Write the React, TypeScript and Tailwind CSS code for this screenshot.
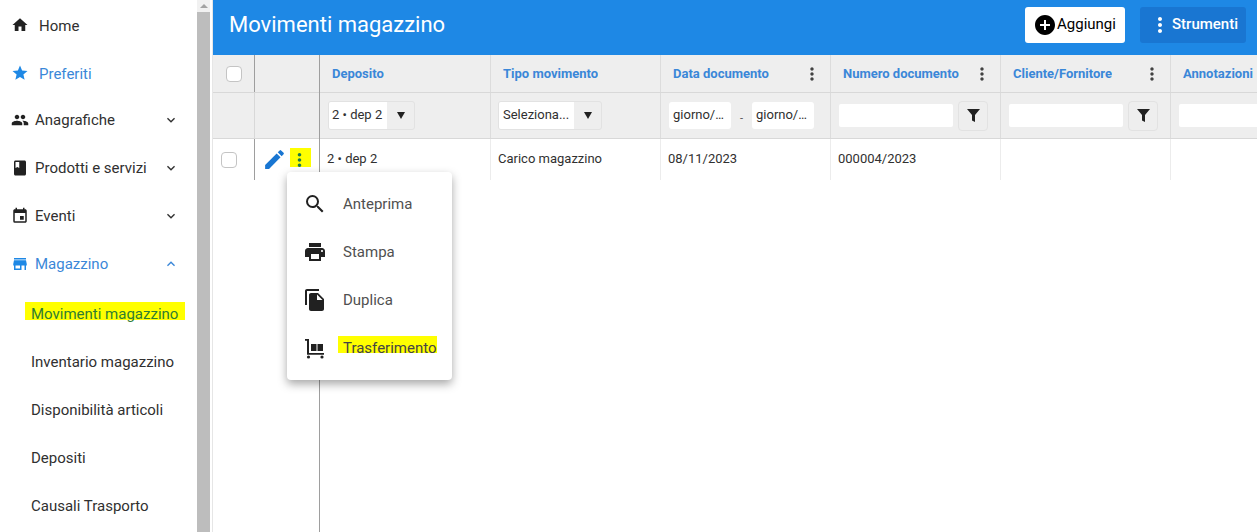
import type { ReactNode } from "react"
import {
  MdAddCircle,
  MdBook,
  MdEdit,
  MdEvent,
  MdExpandLess,
  MdExpandMore,
  MdFileCopy,
  MdHome,
  MdMoreVert,
  MdPeople,
  MdPrint,
  MdSearch,
  MdStar,
  MdStore,
} from "react-icons/md"

const font = "font-['Roboto',sans-serif]"

function TrolleyIcon() {
  return (
    <svg viewBox="0 0 24 24" className="h-6 w-6" fill="#212121">
      <path d="M2 3h4v14h15v1.7H4V4.7H2z" />
      <path d="M8 8h5.5v7H8zM14.5 8H20v7h-5.5z" />
      <circle cx="5.5" cy="21" r="1.6" />
      <circle cx="19" cy="21" r="1.6" />
    </svg>
  )
}

function CaretIcon() {
  return (
    <svg viewBox="0 0 8 7" className="h-[7px] w-[8px]" fill="#212121">
      <path d="M0 0h8L4 7z" />
    </svg>
  )
}

function FunnelIcon() {
  return (
    <svg viewBox="0 0 13 13" className="h-[13px] w-[13px]" fill="#212121">
      <path d="M0 0h13L8 6v7L5 11.5V6z" />
    </svg>
  )
}

function NavItem({
  icon,
  label,
  active,
  wide,
  open,
}: {
  icon: ReactNode
  label: string
  active?: boolean
  wide?: boolean
  open?: boolean
}) {
  return (
    <div
      className={`flex h-12 items-center pl-[11px] pr-[18px] text-[15px] ${active ? "text-[#3a87d8]" : "text-[#303030]"}`}
    >
      <span className={`flex w-[24px] text-[18px] ${wide ? "" : "-mt-[3px]"} ${active ? "text-[#1e88e5]" : "text-[#212121]"}`}>
        {icon}
      </span>
      <span className={wide ? "" : "ml-1"}>{label}</span>
      {open !== undefined && (
        <span className="ml-auto flex text-[16px]">{open ? <MdExpandLess /> : <MdExpandMore />}</span>
      )}
    </div>
  )
}

function SubItem({ label, marked }: { label: string; marked?: boolean }) {
  return (
    <div className="flex h-12 items-center pl-[31px] text-[15px] text-[#303030]">
      {marked ? (
        <span className="-mt-[6px] -ml-[6px] bg-[#ffff00] pt-[6px] pl-[6px] pr-[7px] leading-[12px] text-[#2f7d32]">
          {label}
        </span>
      ) : (
        label
      )}
    </div>
  )
}

function Sidebar() {
  return (
    <aside className="flex w-[197px] shrink-0 flex-col pt-[2px]">
      <NavItem icon={<MdHome />} label="Home" />
      <NavItem icon={<MdStar />} label="Preferiti" active />
      <div className="-mt-[2px]">
        <NavItem icon={<MdPeople />} label="Anagrafiche" wide open={false} />
        <NavItem icon={<MdBook />} label="Prodotti e servizi" wide open={false} />
        <NavItem icon={<MdEvent />} label="Eventi" wide open={false} />
        <NavItem icon={<MdStore />} label="Magazzino" wide active open />
      </div>
      <div className="mt-[2px]">
        <SubItem label="Movimenti magazzino" marked />
        <SubItem label="Inventario magazzino" />
        <SubItem label="Disponibilità articoli" />
        <SubItem label="Depositi" />
        <SubItem label="Causali Trasporto" />
      </div>
    </aside>
  )
}

function Scrollbar() {
  return (
    <div className="flex w-[16px] shrink-0 flex-col border-r border-[#e6e6e6] bg-white">
      <div className="flex w-[13px] flex-col">
        <div className="flex h-[12px] items-center justify-center bg-[#f1f1f1]">
          <div className="h-0 w-0 border-x-[4px] border-b-[4px] border-x-transparent border-b-[#a3a3a3]" />
        </div>
        <div className="h-[520px] bg-[#bdbdbd]" />
      </div>
    </div>
  )
}

function HeaderCell({ label, menu = true, width = "w-[170px]" }: { label: string; menu?: boolean; width?: string }) {
  return (
    <div className={`flex h-[37px] ${width} shrink-0 items-center border-r border-[#dcdcdc] pl-3 pr-[8px]`}>
      <span className="truncate text-[13px] font-bold text-[#3a87d8]">{label}</span>
      {menu && <MdMoreVert className="ml-auto shrink-0 text-[20px] text-[#424242]" />}
    </div>
  )
}

function SelectFilter({ value, width, pad }: { value: string; width: string; pad: string }) {
  return (
    <div className={`flex h-[29px] ${width} overflow-hidden rounded-[3px] border border-[#e2e2e2] bg-[#eeeeee]`}>
      <span className={`flex flex-1 items-center bg-white pb-[2px] text-[13px] text-[#303030] ${pad}`}>{value}</span>
      <span className="flex w-[27px] items-center justify-center">
        <CaretIcon />
      </span>
    </div>
  )
}

function TextFilter() {
  return (
    <div className="flex items-center gap-[5px]">
      <div className="h-[23px] w-[114px] rounded-[2px] bg-white" />
      <span className="flex h-[30px] w-[30px] items-center justify-center rounded-[4px] border border-[#e2e2e2]">
        <FunnelIcon />
      </span>
    </div>
  )
}

function DateBox() {
  return (
    <span className="flex h-[27px] w-[62px] items-center rounded-[3px] bg-white pb-px pl-[4px] text-[13px] text-[#303030]">
      giorno/…
    </span>
  )
}

function FilterCell({ children, width = "w-[170px]", pad = "pl-2" }: { children?: ReactNode; width?: string; pad?: string }) {
  return (
    <div className={`flex h-[45px] ${width} shrink-0 items-center border-r border-[#dcdcdc] ${pad}`}>{children}</div>
  )
}

function RowCell({ children, width = "w-[170px]" }: { children?: ReactNode; width?: string }) {
  return (
    <div className={`flex h-[41px] ${width} shrink-0 items-center border-r border-[#ececec] pb-[2px] pl-[7px] text-[13px] text-[#303030]`}>
      {children}
    </div>
  )
}

function Checkbox({ className }: { className: string }) {
  return <div className={`h-4 w-4 rounded-[4px] border border-[#c4c4c4] bg-white ${className}`} />
}

function FrozenColumns() {
  return (
    <div className="w-[107px] shrink-0 border-r border-[#9e9e9e]">
      <div className="flex h-[38px] border-b border-[#d8d8d8] bg-[#eeeeee]">
        <div className="flex w-[42px] items-center justify-center border-r border-[#9e9e9e]">
          <Checkbox className="ml-px" />
        </div>
      </div>
      <div className="flex h-[46px] border-b border-[#d8d8d8] bg-[#eeeeee]">
        <div className="w-[42px] border-r border-[#d8d8d8]" />
      </div>
      <div className="flex h-[41px]">
        <div className="flex w-[42px] items-center justify-center border-r border-[#9e9e9e]">
          <Checkbox className="-ml-[10px]" />
        </div>
        <div className="flex items-center pl-[7px]">
          <MdEdit className="text-[25px] text-[#1976d2]" />
          <span className="mb-[5px] ml-[3px] flex h-[19px] w-[21px] items-center justify-center bg-[#ffff00]">
            <MdMoreVert className="-translate-x-px translate-y-[3px] text-[22px] text-[#1b7a4a]" />
          </span>
        </div>
      </div>
    </div>
  )
}

function MenuRow({ icon, label, marked }: { icon: ReactNode; label: string; marked?: boolean }) {
  return (
    <div className="flex h-12 items-center pl-[16px] text-[15px] text-[#505050]">
      <span className="flex w-[40px] text-[24px] text-[#212121]">{icon}</span>
      {marked ? (
        <span className="-mt-[7px] -ml-[5px] bg-[#ffff00] pt-[7px] pl-[5px] leading-[10px] text-[#444444]">{label}</span>
      ) : (
        label
      )}
    </div>
  )
}

function RowMenu() {
  return (
    <div className="absolute left-[74px] top-[117px] w-[165px] rounded-[4px] bg-white py-[8px] shadow-[0_4px_10px_rgba(0,0,0,0.35)]">
      <MenuRow icon={<MdSearch />} label="Anteprima" />
      <MenuRow icon={<MdPrint />} label="Stampa" />
      <MenuRow icon={<MdFileCopy />} label="Duplica" />
      <MenuRow icon={<TrolleyIcon />} label="Trasferimento" marked />
    </div>
  )
}

function Grid() {
  return (
    <div className="relative flex min-h-0 flex-1 overflow-hidden">
      <FrozenColumns />
      <div className="min-w-0 flex-1">
        <div className="flex border-b border-[#d8d8d8] bg-[#eeeeee]">
          <HeaderCell label="Deposito" menu={false} width="w-[171px]" />
          <HeaderCell label="Tipo movimento" menu={false} />
          <HeaderCell label="Data documento" />
          <HeaderCell label="Numero documento" />
          <HeaderCell label="Cliente/Fornitore" />
          <HeaderCell label="Annotazioni" />
        </div>
        <div className="flex border-b border-[#d8d8d8] bg-[#eeeeee]">
          <FilterCell width="w-[171px]">
            <SelectFilter value="2 • dep 2" width="w-[87px]" pad="pl-[3px]" />
          </FilterCell>
          <FilterCell pad="pl-[7px]">
            <SelectFilter value="Seleziona..." width="w-[104px]" pad="pl-[4px]" />
          </FilterCell>
          <FilterCell>
            <DateBox />
            <span className="mt-2 w-[21px] text-center text-[11px] text-[#505050]">-</span>
            <DateBox />
          </FilterCell>
          <FilterCell>
            <TextFilter />
          </FilterCell>
          <FilterCell>
            <TextFilter />
          </FilterCell>
          <FilterCell>
            <TextFilter />
          </FilterCell>
        </div>
        <div className="flex">
          <RowCell width="w-[171px]">2 • dep 2</RowCell>
          <RowCell>Carico magazzino</RowCell>
          <RowCell>08/11/2023</RowCell>
          <RowCell>000004/2023</RowCell>
          <RowCell />
          <RowCell />
        </div>
      </div>
      <RowMenu />
    </div>
  )
}

function TopBar() {
  return (
    <header className="flex h-[55px] shrink-0 items-start bg-[#1e88e5] pl-[16px] pr-[11px] pt-[7px]">
      <h1 className="text-[22px] font-normal leading-9 text-white">Movimenti magazzino</h1>
      <button className="ml-auto flex h-9 w-[100px] items-center rounded-[3px] bg-white pl-[8px] text-[15px] text-black">
        <MdAddCircle className="text-[24px]" />
        <span className="-mt-[2px]">Aggiungi</span>
      </button>
      <button className="ml-[15px] flex h-9 w-[106px] items-center rounded-[3px] bg-[#1976d2] pl-2 text-[15px] font-medium text-white">
        <MdMoreVert className="text-[24px]" />
        <span className="-mt-[2px]">Strumenti</span>
      </button>
    </header>
  )
}

export default function App() {
  return (
    <div className={`flex h-[532px] w-[1257px] overflow-hidden bg-white ${font}`}>
      <Sidebar />
      <Scrollbar />
      <main className="flex min-w-0 flex-1 flex-col">
        <TopBar />
        <Grid />
      </main>
    </div>
  )
}
